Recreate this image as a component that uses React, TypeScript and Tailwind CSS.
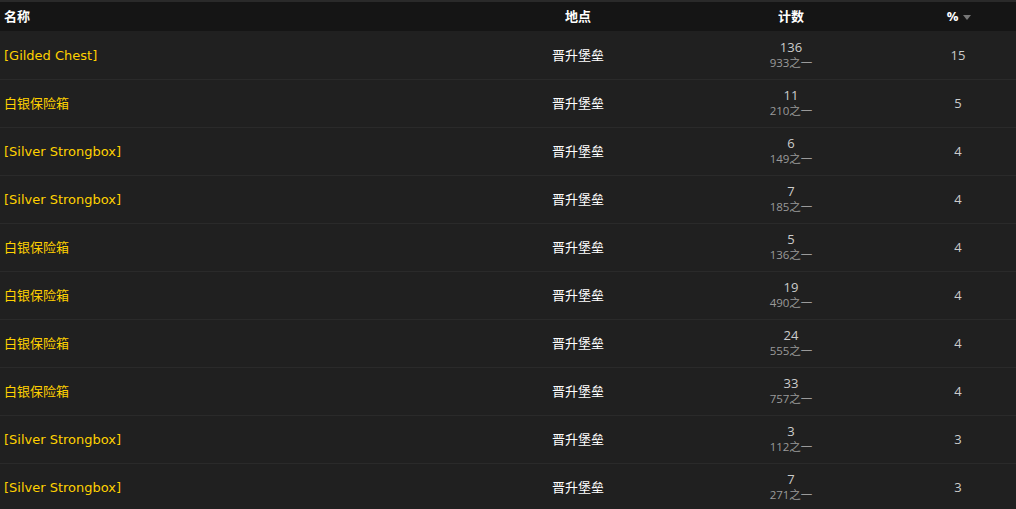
type Row = { name: string; zone: string; count: number; total: number; pct: number }

const rows: Row[] = [
  { name: '[Gilded Chest]', zone: '晋升堡垒', count: 136, total: 933, pct: 15 },
  { name: '白银保险箱', zone: '晋升堡垒', count: 11, total: 210, pct: 5 },
  { name: '[Silver Strongbox]', zone: '晋升堡垒', count: 6, total: 149, pct: 4 },
  { name: '[Silver Strongbox]', zone: '晋升堡垒', count: 7, total: 185, pct: 4 },
  { name: '白银保险箱', zone: '晋升堡垒', count: 5, total: 136, pct: 4 },
  { name: '白银保险箱', zone: '晋升堡垒', count: 19, total: 490, pct: 4 },
  { name: '白银保险箱', zone: '晋升堡垒', count: 24, total: 555, pct: 4 },
  { name: '白银保险箱', zone: '晋升堡垒', count: 33, total: 757, pct: 4 },
  { name: '[Silver Strongbox]', zone: '晋升堡垒', count: 3, total: 112, pct: 3 },
  { name: '[Silver Strongbox]', zone: '晋升堡垒', count: 7, total: 271, pct: 3 },
]

const grid = 'grid grid-cols-[474px_208px_218px_116px]'

export default function App() {
  return (
    <div className="w-[1016px] h-[509px] overflow-hidden bg-[#202020] text-[13px] font-['Open_Sans','Noto_Sans_CJK_SC',sans-serif]">
      {/* header */}
      <div className={grid + ' h-[32px] items-center bg-[#151515] border-t-2 border-[#2a2a2a] border-b border-b-[#202020] font-bold text-white'}>
        <div className="pl-[4px]">名称</div>
        <div className="text-center">地点</div>
        <div className="text-center">计数</div>
        <div className="flex items-center justify-center gap-[5px] pl-[2px]">
          <span>%</span>
          <svg width="8" height="5" viewBox="0 0 8 5" className="mt-[1px]">
            <path d="M0 0h8L4 5z" fill="#777" />
          </svg>
        </div>
      </div>

      {rows.map((r, i) => (
        <div key={i} className={grid + ' h-[48px] items-center border-b border-[#2a2a2a]'}>
          <div className="pl-[4px] text-[#ffd100] font-['DejaVu_Sans','Noto_Sans_CJK_SC',sans-serif]">{r.name}</div>
          <div className="text-center text-white">{r.zone}</div>
          <div className="flex flex-col items-center leading-[16px] -mt-[1px]">
            <span className="text-[#cccccc]">{r.count}</span>
            <span className="text-[11.5px] text-[#9a9a9a]">{r.total}之一</span>
          </div>
          <div className="text-center text-[#cccccc]">{r.pct}</div>
        </div>
      ))}
    </div>
  )
}
